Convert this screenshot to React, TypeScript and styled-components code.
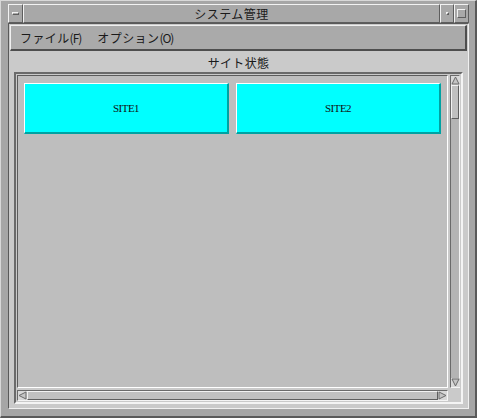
import React from 'react';
import styled, { createGlobalStyle, css } from 'styled-components';

const GlobalStyle = createGlobalStyle`
  html, body {
    margin: 0;
    padding: 0;
    background: #ffffff;
  }
  * { box-sizing: border-box; }
`

const raised = (w: number) => css`
  border-style: solid;
  border-width: ${w}px;
  border-color: #f2f2f2 #5e5e5e #5e5e5e #f2f2f2;
`
const sunken = (w: number) => css`
  border-style: solid;
  border-width: ${w}px;
  border-color: #6a6a6a #f4f4f4 #f4f4f4 #6a6a6a;
`

const Window = styled.div`
  width: 477px;
  height: 418px;
  display: flex;
  flex-direction: column;
  background: #a6a6a6;
  border-style: solid;
  border-width: 1px 2px 2px 1px;
  border-color: #d8d8d8 #5a5a5a #5a5a5a #d8d8d8;
  padding: 3px 6px 7px 7px;
  font-family: "Noto Sans CJK JP", "Noto Sans", sans-serif;
  color: #1a1a1a;
`

const TitleBar = styled.div`
  display: flex;
  height: 19px;
  flex-shrink: 0;
`

const FrameButton = styled.div<{ $w: number }>`
  width: ${p => p.$w}px;
  height: 100%;
  ${raised(1)};
  background: #a8a8a8;
  display: flex;
  align-items: center;
  justify-content: center;
`

const Title = styled.div`
  flex: 1;
  ${raised(1)};
  background: #a8a8a8;
  display: flex;
  align-items: center;
  justify-content: center;
  padding-top: 1px;
  font-size: 12px;
  line-height: 1;
  letter-spacing: 0.5px;
`

const Dash = styled.div`
  width: 7px;
  height: 3px;
  ${raised(1)};
  background: #a8a8a8;
`

const Dot = styled.div`
  width: 3px;
  height: 3px;
  ${raised(1)};
  background: #a8a8a8;
`

const Square = styled.div`
  width: 9px;
  height: 9px;
  ${raised(1)};
  background: #a8a8a8;
`

const Client = styled.div`
  flex: 1;
  display: flex;
  flex-direction: column;
  background: #cacaca;
  border-style: solid;
  border-width: 1px;
  border-color: #5a5a5a #f0f0f0 #f0f0f0 #5a5a5a;
  padding: 1px 1px 4px 1px;
`

const MenuBar = styled.div`
  height: 26px;
  flex-shrink: 0;
  display: flex;
  align-items: center;
  gap: 16px;
  padding: 1px 9px 0;
  background: #aaaaaa;
  border-style: solid;
  border-width: 1px 2px 2px 1px;
  border-color: #f0f0f0 #4e4e4e #4e4e4e #f0f0f0;
`

const MenuItem = styled.span`
  font-size: 12px;
  line-height: 1;
  letter-spacing: 0.4px;
`

const Paren = styled.span`
  font-size: 12px;
  letter-spacing: -1px;
`

const Caption = styled.div`
  height: 21px;
  flex-shrink: 0;
  display: flex;
  align-items: center;
  justify-content: center;
  padding-top: 1px;
  font-size: 12px;
  letter-spacing: 0.3px;
`

const ScrollFrame = styled.div`
  flex: 1;
  margin: 0 4px;
  ${sunken(2)};
  padding: 1px;
  display: grid;
  grid-template-columns: 1fr 10px;
  grid-template-rows: 1fr 11px;
  gap: 2px 2px;
`

const Viewport = styled.div`
  background: #bebebe;
  border-style: solid;
  border-width: 1px;
  border-color: #5c5c5c #ffffff #ffffff #5c5c5c;
  padding: 7px 6px;
  display: grid;
  grid-template-columns: 1fr 1fr;
  align-content: start;
  gap: 7px;
`

const SiteButton = styled.div`
  height: 51px;
  background: #00ffff;
  border-style: solid;
  border-width: 1px 2px 2px 1px;
  border-color: #ffffff #00a2a2 #00a2a2 #ffffff;
  display: flex;
  align-items: center;
  justify-content: center;
  font-family: "Liberation Serif", serif;
  font-size: 11px;
  letter-spacing: -0.5px;
  color: #111;
`

const Trough = styled.div<{ $dir: 'v' | 'h' }>`
  background: #b4b4b4;
  ${sunken(1)};
  display: flex;
  flex-direction: ${p => (p.$dir === 'v' ? 'column' : 'row')};
`

const Arrow = styled.div`
  width: 9px;
  height: 9px;
  flex-shrink: 0;
  background: #d8d8d8;
  display: flex;
  align-items: center;
  justify-content: center;
`

const Thumb = styled.div<{ $len?: number }>`
  ${raised(1)};
  background: #c0c0c0;
  ${p => (p.$len ? `flex: 0 0 ${p.$len}px;` : 'flex: 1;')}
`

const Spacer = styled.div`
  flex: 1;
`

function ArrowIcon({ dir }: { dir: 'up' | 'down' | 'left' | 'right' }) {
  const pts = {
    up: '4.5,1 8,8 1,8',
    down: '1,1 8,1 4.5,8',
    left: '1,4.5 8,1 8,8',
    right: '1,1 8,4.5 1,8',
  }[dir]
  return (
    <svg width="9" height="9" viewBox="0 0 9 9">
      <polygon points={pts} fill="#c4c4c4" stroke="#6a6a6a" strokeWidth="1" />
    </svg>
  )
}

export default function App() {
  return (
    <>
      <GlobalStyle />
      <Window>
        <TitleBar>
          <FrameButton $w={15}><Dash /></FrameButton>
          <Title>システム管理</Title>
          <FrameButton $w={14}><Dot /></FrameButton>
          <FrameButton $w={15}><Square /></FrameButton>
        </TitleBar>
        <Client>
          <MenuBar>
            <MenuItem>ファイル<Paren>(F)</Paren></MenuItem>
            <MenuItem>オプション<Paren>(O)</Paren></MenuItem>
          </MenuBar>
          <Caption>サイト状態</Caption>
          <ScrollFrame>
            <Viewport>
              <SiteButton>SITE1</SiteButton>
              <SiteButton>SITE2</SiteButton>
            </Viewport>
            <Trough $dir="v">
              <Arrow><ArrowIcon dir="up" /></Arrow>
              <Thumb $len={34} />
              <Spacer />
              <Arrow><ArrowIcon dir="down" /></Arrow>
            </Trough>
            <Trough $dir="h">
              <Arrow><ArrowIcon dir="left" /></Arrow>
              <Thumb />
              <Arrow><ArrowIcon dir="right" /></Arrow>
            </Trough>
            <div />
          </ScrollFrame>
        </Client>
      </Window>
    </>
  );
}
